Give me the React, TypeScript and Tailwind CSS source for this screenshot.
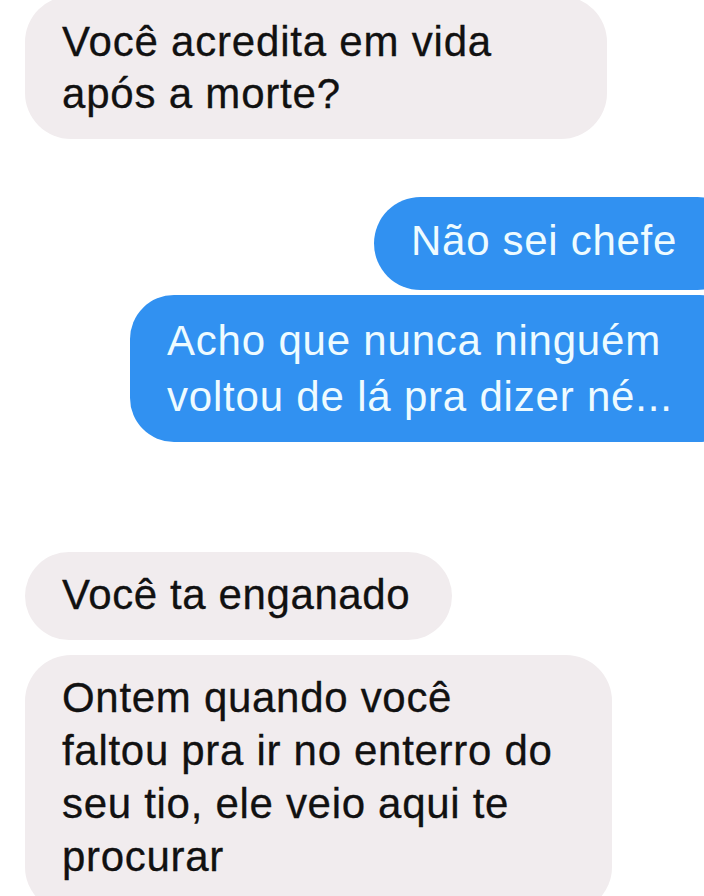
import React from "react";

const font = { fontFamily: '"Liberation Sans", Arial, Helvetica, sans-serif' };

export default function App() {
  return (
    <div
      className="w-[704px] h-[896px] overflow-hidden bg-white flex flex-col"
      style={font}
    >
      {/* Bubble 1 */}
      <div className="ml-[25px] mt-[-4px] w-[582px] rounded-[46px] bg-[#f1ecee] pl-[37px] pt-[20px] pb-[19px] text-[42px] leading-[52px] tracking-[0.8px] text-[#111111] [-webkit-text-stroke:0.3px_#111111]">
        Você acredita em vida
        <br />
        após a morte?
      </div>

      {/* Bubble 2 */}
      <div className="self-end mr-[-40px] mt-[58px] rounded-[47px] bg-[#3191f1] pl-[37px] pr-[67px] pt-[18px] pb-[23px] text-[42px] leading-[52px] tracking-[0.7px] text-[#eefbff]">
        Não sei chefe
      </div>

      {/* Bubble 3 */}
      <div className="self-end mr-[-40px] mt-[5px] w-[614px] rounded-[44px] bg-[#3191f1] pl-[37px] pt-[18px] pb-[17px] text-[42px] leading-[56px] tracking-[0.8px] text-[#eefbff]">
        Acho que nunca ninguém
        <br />
        voltou de lá pra dizer né...
      </div>

      {/* Bubble 4 */}
      <div className="ml-[25px] mt-[110px] w-[427px] rounded-[44px] bg-[#f1ecee] pl-[37px] pt-[17px] pb-[19px] text-[42px] leading-[52px] tracking-[0.6px] text-[#111111] [-webkit-text-stroke:0.3px_#111111]">
        Você ta enganado
      </div>

      {/* Bubble 5 */}
      <div className="ml-[25px] mt-[15px] w-[587px] rounded-[46px] bg-[#f1ecee] pl-[37px] pt-[16px] pb-[30px] text-[42px] leading-[53px] tracking-[0.7px] text-[#111111] [-webkit-text-stroke:0.3px_#111111]">
        Ontem quando você
        <br />
        faltou pra ir no enterro do
        <br />
        seu tio, ele veio aqui te
        <br />
        procurar
      </div>
    </div>
  );
}
